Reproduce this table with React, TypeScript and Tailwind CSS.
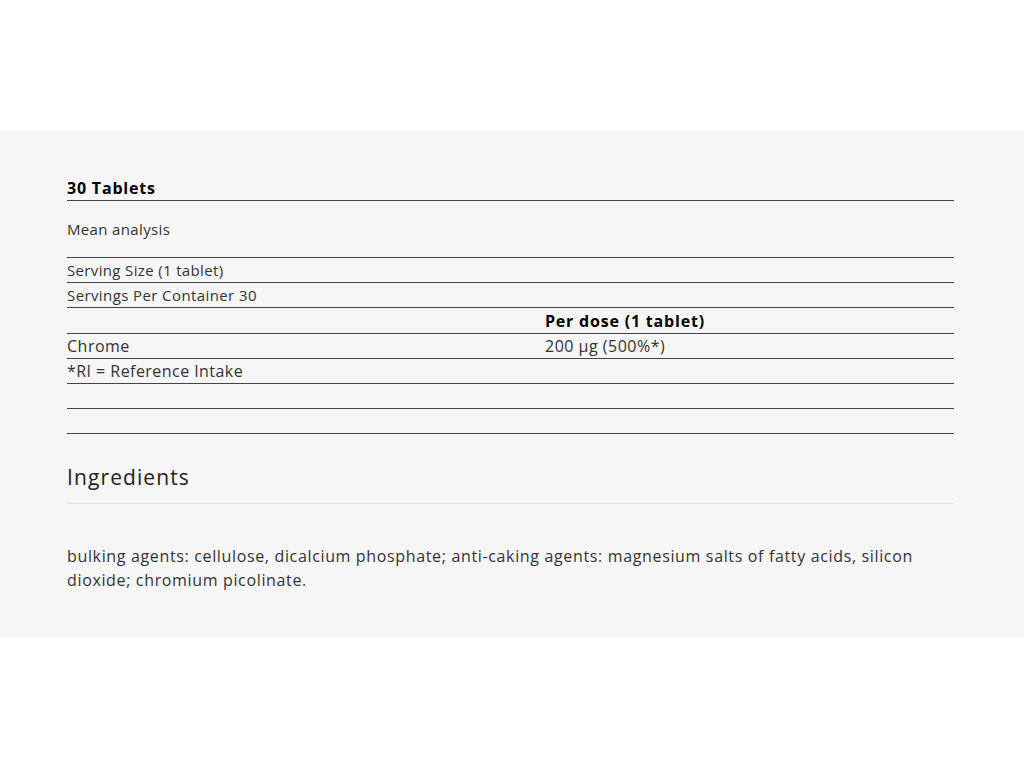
export default function App() {
  const font = { fontFamily: '"Open Sans", "Liberation Sans", sans-serif' };
  return (
    <div className="min-h-[768px] bg-white" style={font}>
      <div className="h-[130px]" />
      <div className="bg-[#f6f6f6] h-[508px] px-[67px] pt-[48px] text-[#222]">
        <div className="w-[887px]">
          <div className="h-[23px] border-b border-[#444] text-[16px] font-bold leading-[20px] tracking-[0.8px] text-black">30 Tablets</div>
          <div className="h-[57px] border-b border-[#444] flex items-center text-[15px] tracking-[0.35px] text-[#333]">Mean analysis</div>
          <div className="h-[25px] border-b border-[#444] flex items-center text-[15px] tracking-[0.35px] text-[#333]">Serving Size (1 tablet)</div>
          <div className="h-[25px] border-b border-[#444] flex items-center text-[15px] tracking-[0.4px] text-[#333]">Servings Per Container 30</div>
          <div className="h-[26px] border-b border-[#444] flex items-center">
            <div className="w-[478px]" />
            <div className="text-[16px] font-bold tracking-[0.8px] text-black">Per dose (1 tablet)</div>
          </div>
          <div className="h-[25px] border-b border-[#444] flex items-center text-[16px] tracking-[0.5px] text-[#333]">
            <div className="w-[478px]">Chrome</div>
            <div>200 µg (500%*)</div>
          </div>
          <div className="h-[25px] border-b border-[#444] flex items-center text-[16px] tracking-[0.45px] text-[#333]">*RI = Reference Intake</div>
          <div className="h-[25px] border-b border-[#444]" />
          <div className="h-[25px] border-b border-[#444]" />
          <div className="h-[70px] border-b border-[#e3e3e3] flex items-center text-[21px] tracking-[1.1px] text-[#222] pt-[18px]">Ingredients</div>
          <p className="mt-[40px] text-[16px] leading-[24px] tracking-[0.65px] text-[#333]">
            bulking agents: cellulose, dicalcium phosphate; anti-caking agents: magnesium salts of fatty acids, silicon dioxide; chromium picolinate.
          </p>
        </div>
      </div>
    </div>
  );
}
